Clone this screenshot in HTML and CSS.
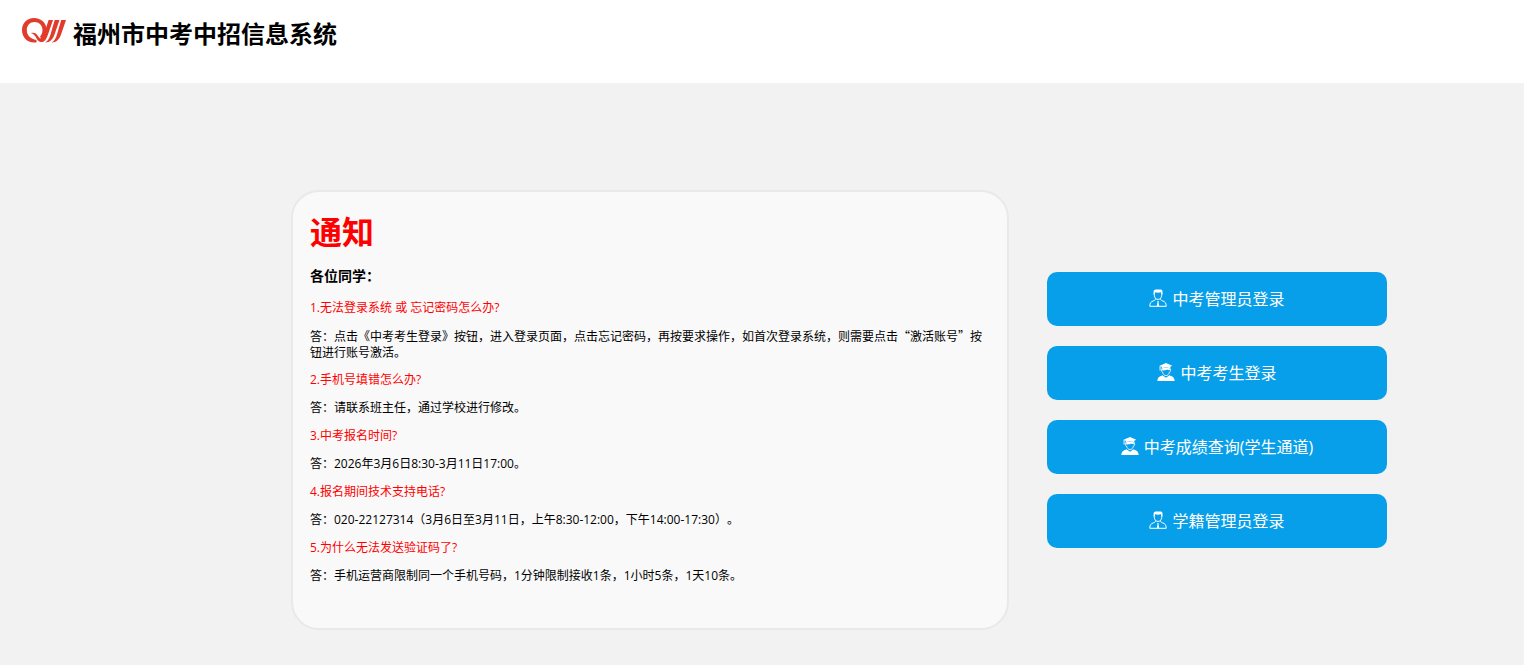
FILE: index.html
```html
<!DOCTYPE html>
<html lang="zh-CN">
<head>
	<meta charset="utf-8">
	<title>福州市中考中招信息系统</title>
	<link rel="stylesheet" href="styles.css">
</head>
<body>

<!-- icons shared by the login buttons -->
<svg class="symbols" aria-hidden="true">
	<symbol id="icon-admin" viewBox="0 0 18 18">
		<g fill="none" stroke="currentColor" stroke-linejoin="round">
			<path d="M5.200 4.200C5.200 8 6.200 10.400 9 10.400s3.800-2.400 3.800-6.200"/>
			<path d="M6.500 9.500c0 1.500-.5 1.800-2 2.300C1.800 12.700.8 14 .8 17.300h16.400c0-3.300-1-4.600-3.700-5.500-1.500-.5-2-.8-2-2.300"/>
		</g>
		<path fill="currentColor" d="M4.600 5.500V2.200C4.800.9 5.900.4 7.300.4h4.500c1.200.1 1.700.9 1.700 2.200v2.900h-1.200l-.4-2.300c-2 .6-4 .6-5.800 0l-.4 2.300z"/>
		<path fill="currentColor" d="M8.200 12h1.600l-.3 1.200.7 3.800H7.800l.7-3.800z"/>
	</symbol>
	<symbol id="icon-student" viewBox="0 0 18 18">
		<path fill="currentColor" d="M9 0l6.300 2.700-2 1v1.500c-2.800-.9-5.800-.9-8.600 0V3.800l-1.200-.5v4.200h-.9V2.800z"/>
		<path fill="none" stroke="currentColor" stroke-width=".8" d="M4.600 5.500C4 8 4.500 8.700 5.500 9c.5 2 1.800 3.600 3.500 3.600s3-1.600 3.500-3.600c1-.3 1.500-1 .9-3.500"/>
		<path fill="currentColor" d="M5 5.300c2.600-.8 5.400-.8 8 0l-.3 1.900c-1.200 0-2-.2-2.700-.6-1 .7-2.500 1-4.700.9z"/>
		<path fill="currentColor" d="M5.500 12.300L9 14.800l3.500-2.500c.5.300 1 .6 1.700.8 2.200.7 3.200 2 3.500 4.900H.3c.3-2.900 1.300-4.200 3.500-4.900.7-.2 1.200-.5 1.700-.8z"/>
	</symbol>
</svg>

<div class="header">
	<svg class="logo" viewBox="0 0 44 26" aria-hidden="true">
		<g fill="#e13b2b">
			<path d="M14.500 24.500H12C5 24.500 0 19 0 12S5 0 12 0s12.500 5 12.500 11.500c0 4.500-2 7.500-4.800 9.500l-1.700-2.300c1.500-1.700 2.500-3.700 2.500-6.700 0-4.700-3.500-8-8-8s-7.700 3.300-7.700 8c0 5.500 3.700 9 9.700 10z"/>
			<path d="M9 15c3.500-.8 5.500.5 7 3 1.500 2.600 3 3.200 4.500 1 1-1.500 1.700-3.500 2.500-6l3.600-11H31l-4.500 13c-1 3-1.800 5.500-3.300 7.200-2.700 2.900-6.200 2.200-8.200-1-1.300-2.500-2.800-5.200-6-6.200z"/>
			<path d="M32.700 2h4.800l-4.800 14c-2 5.500-4.500 8.500-9.700 8.500 3-1.500 4.200-4 5.500-8z"/>
			<path d="M39.200 2H44l-4.800 14c-2 5.500-4.500 8.500-9.700 8.500 3-1.500 4.200-4 5.500-8z"/>
		</g>
	</svg>
	<h1>福州市中考中招信息系统</h1>
</div>

<div class="main">
	<div class="notice">
		<h2>通知</h2>
		<h3>各位同学：</h3>

		<p class="question">1.无法登录系统 或 忘记密码怎么办?</p>
		<p class="quoted">答：点击《中考考生登录》按钮，进入登录页面，点击忘记密码，再按要求操作，如首次登录系统，则需要点击“激活账号”按钮进行账号激活。</p>

		<p class="question">2.手机号填错怎么办?</p>
		<p>答：请联系班主任，通过学校进行修改。</p>

		<p class="question">3.中考报名时间?</p>
		<p>答：2026年3月6日8:30-3月11日17:00。</p>

		<p class="question">4.报名期间技术支持电话?</p>
		<p>答：020-22127314（3月6日至3月11日，上午8:30-12:00，下午14:00-17:30）。</p>

		<p class="question">5.为什么无法发送验证码了?</p>
		<p>答：手机运营商限制同一个手机号码，1分钟限制接收1条，1小时5条，1天10条。</p>
	</div>

	<div class="logins">
		<button type="button"><svg class="icon" aria-hidden="true"><use href="#icon-admin"/></svg>中考管理员登录</button>
		<button type="button"><svg class="icon" aria-hidden="true"><use href="#icon-student"/></svg>中考考生登录</button>
		<button type="button"><svg class="icon" aria-hidden="true"><use href="#icon-student"/></svg>中考成绩查询(学生通道)</button>
		<button type="button"><svg class="icon" aria-hidden="true"><use href="#icon-admin"/></svg>学籍管理员登录</button>
	</div>
</div>

</body>
</html>
```

FILE: styles.css
```css
/* Reset */

* { margin: 0; padding: 0; box-sizing: border-box; }


/* Page */

body {
	background-color: #f2f2f2;
	color: black;
	font-family: "Open Sans", "Noto Sans CJK SC", sans-serif;
	font-size: 12px;
	line-height: 16px;
	text-spacing-trim: space-all;
}

.symbols {
	display: none;
}


/* Header */

.header {
	display: flex;
	align-items: flex-start;
	gap: 7px;
	height: 83px;
	padding: 18px 22px;
	background-color: white;
}

.header h1 {
	font-size: 24px;
	line-height: 32px;
}

.logo {
	width: 44px;
	height: 26px;
}


/* Main area: notice on the left, login buttons on the right */

.main {
	display: grid;
	grid-template-columns: 1fr 340px;
	align-items: center;
	gap: 38px;
	padding: 107px 137px 36px 291px;
}


/* Notice */

.notice {
	padding: 19px 17px 32px;
	background-color: #f9f9f9;
	border: 2px solid #e9e9e9;
	border-radius: 28px;
}

.notice h2 {
	margin-bottom: 14px;
	color: red;
	font-size: 32px;
	line-height: 42px;
}

.notice h3 {
	margin-bottom: 15px;
	font-size: 14px;
	line-height: 18px;
}

.notice p {
	margin-bottom: 12px;
}

.notice .question {
	color: red;
}

/* full-width quotation marks */
.notice .quoted {
	font-family: "Noto Sans CJK SC", sans-serif;
}


/* Login buttons */

.logins {
	display: flex;
	flex-direction: column;
	gap: 20px;
}

.logins button {
	display: flex;
	align-items: center;
	justify-content: center;
	gap: 5px;
	height: 54px;
	padding-bottom: 2px;
	background-color: #089fea;
	border: none;
	border-radius: 10px;
	color: white;
	font-family: inherit;
	font-size: 16px;
	cursor: pointer;
}

.icon {
	width: 18px;
	height: 18px;
}
```
